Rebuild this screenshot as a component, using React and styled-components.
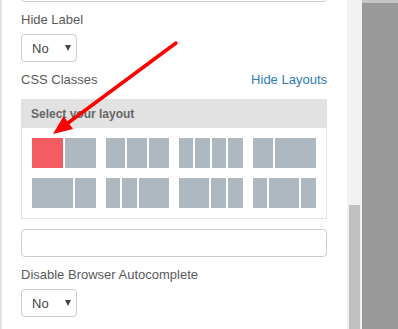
import styled, { createGlobalStyle } from 'styled-components';

const GlobalStyle = createGlobalStyle`
  body {
    margin: 0;
    background: #fff;
    font-family: "Liberation Sans", Arial, sans-serif;
  }
`;

const Screen = styled.div`
  position: relative;
  display: flex;
  width: 398px;
  height: 329px;
  overflow: hidden;
`;

const Panel = styled.div`
  flex: 0 0 347px;
  box-sizing: border-box;
  border-left: 2px solid #e4e4e4;
  padding: 0 20px 0 19px;
  background: #fff;
`;

const Track = styled.div`
  flex: 0 0 15px;
  box-sizing: border-box;
  display: flex;
  flex-direction: column;
  padding: 205px 2px 0;
  background: #f1f1f1;
`;

const Thumb = styled.div`
  flex: 1;
  background: #c1c1c1;
`;

const Backdrop = styled.div`
  flex: 1;
  background: #999;
  border-top: 3px solid #c4c4c4;
`;

const Field = styled.div`
  margin-bottom: ${(p) => p.$gap || 9}px;
`;

const LabelRow = styled.div`
  display: flex;
  justify-content: space-between;
  height: 18px;
  line-height: 18px;
  font-size: 13px;
  color: #5a5a5a;
  margin-bottom: ${(p) => p.$gap || 5}px;
`;

const ToggleLink = styled.a`
  color: #2b7bb9;
  text-decoration: none;
`;

const TextInput = styled.div`
  box-sizing: border-box;
  height: 28px;
  border: 1px solid #ccc;
  border-radius: 4px;
  background: #fff;
  margin-top: ${(p) => p.$offset || 0}px;
`;

const Select = styled.div`
  box-sizing: border-box;
  display: flex;
  align-items: center;
  justify-content: space-between;
  width: 56px;
  height: 28px;
  padding: 0 5px 0 10px;
  border: 1px solid #ccc;
  border-radius: 4px;
  font-size: 13px;
  color: #444;
`;

const Caret = styled.span`
  width: 0;
  height: 0;
  border-left: 3px solid transparent;
  border-right: 3px solid transparent;
  border-top: 6px solid #444;
`;

const LayoutBox = styled.div`
  border: 1px solid #e2e2e2;
  margin-bottom: 10px;
`;

const LayoutHeader = styled.div`
  display: flex;
  align-items: center;
  height: 28px;
  padding-left: 9px;
  background: #e2e2e2;
  font-size: 12px;
  font-weight: bold;
  color: #666;
`;

const LayoutGrid = styled.div`
  display: grid;
  grid-template-columns: repeat(4, 1fr);
  gap: 10px;
  padding: 10px;
`;

const Layout = styled.div`
  display: flex;
  gap: 2px;
  height: 30px;
`;

const Cell = styled.div`
  flex: ${(p) => p.$size} 1 0;
  background: ${(p) => (p.$active ? '#f35c63' : '#aeb8c1')};
`;

const Pointer = styled.svg`
  position: absolute;
  left: 0;
  top: 0;
  pointer-events: none;
`;

const layouts = [
  [1, 1],
  [1, 1, 1],
  [1, 1, 1, 1],
  [1, 2],
  [2, 1],
  [1, 1, 2],
  [2, 1, 1],
  [1, 2, 1],
];

function App() {
  return (
    <>
      <GlobalStyle />
      <Screen>
        <Panel>
          <Field>
            <TextInput $offset={-26} />
          </Field>
          <Field>
            <LabelRow>Hide Label</LabelRow>
            <Select>
              No <Caret />
            </Select>
          </Field>
          <Field>
            <LabelRow $gap={10}>
              <span>CSS Classes</span>
              <ToggleLink href="#">Hide Layouts</ToggleLink>
            </LabelRow>
            <LayoutBox>
              <LayoutHeader>Select your layout</LayoutHeader>
              <LayoutGrid>
                {layouts.map((cols, i) => (
                  <Layout key={i}>
                    {cols.map((size, j) => (
                      <Cell key={j} $size={size} $active={i === 0 && j === 0} />
                    ))}
                  </Layout>
                ))}
              </LayoutGrid>
            </LayoutBox>
            <TextInput />
          </Field>
          <Field>
            <LabelRow>Disable Browser Autocomplete</LabelRow>
            <Select>
              No <Caret />
            </Select>
          </Field>
        </Panel>
        <Track>
          <Thumb />
        </Track>
        <Backdrop />
        <Pointer width="398" height="329" viewBox="0 0 398 329">
          <line x1="176" y1="43" x2="68" y2="123" stroke="#ff0000" strokeWidth="3.5" strokeLinecap="round" />
          <polygon points="53,134 63.5,116.3 73.1,129.1" fill="#ff0000" />
        </Pointer>
      </Screen>
    </>
  );
}

export default App;
